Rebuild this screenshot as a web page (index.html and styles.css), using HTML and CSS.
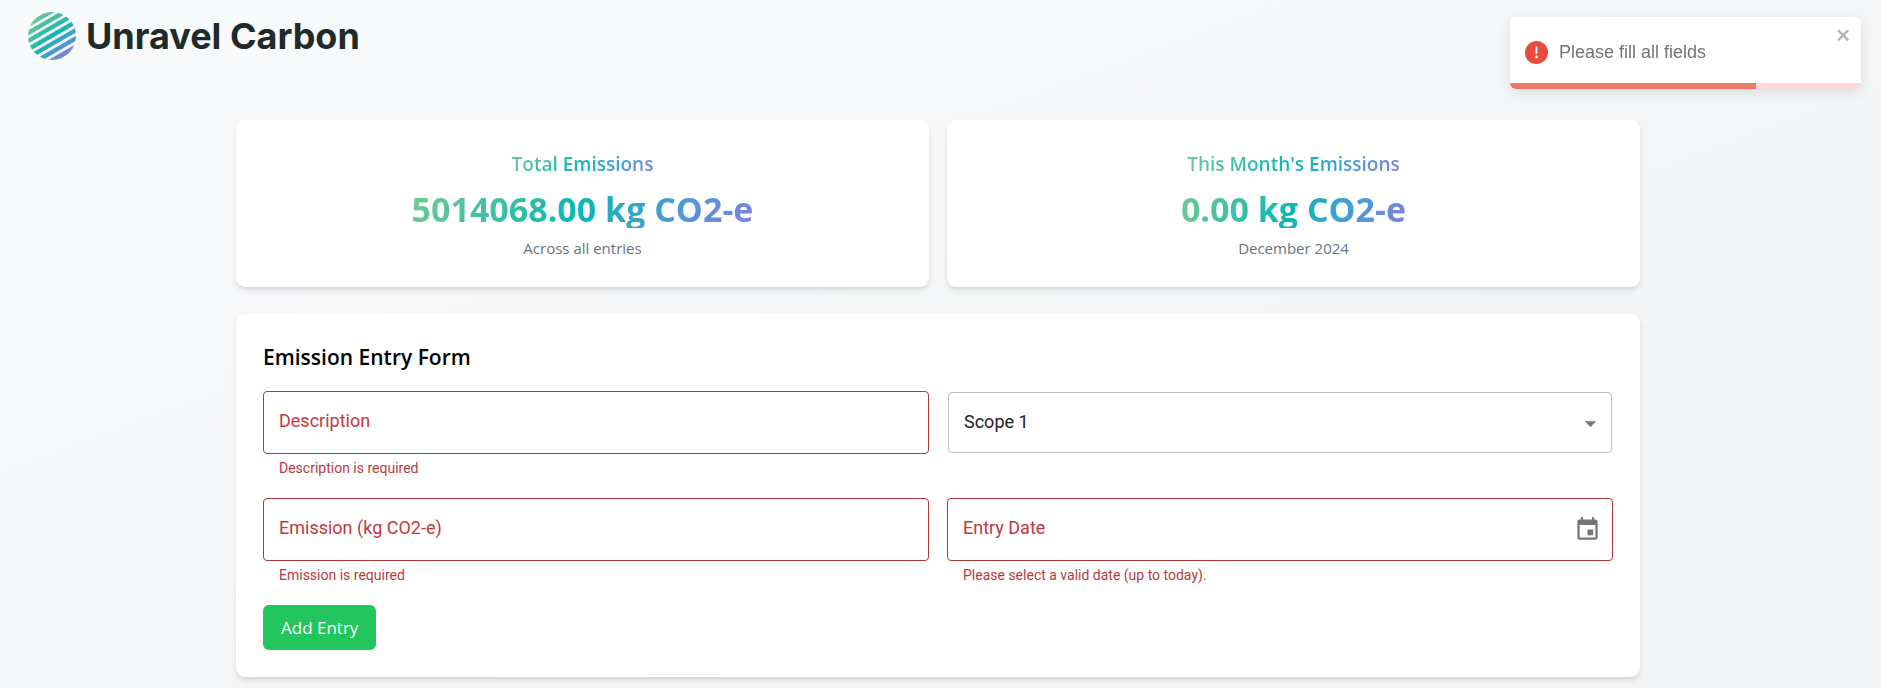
FILE: index.html
```html
<!DOCTYPE html>
<html lang="en">
<head>
<meta charset="utf-8">
<meta name="viewport" content="width=device-width, initial-scale=1">
<title>Unravel Carbon</title>
<link rel="stylesheet" href="styles.css">
</head>
<body>
<header class="header">
  <a class="brand" href="#">
    <svg class="brand-mark" viewBox="0 0 48 48" aria-hidden="true">
      <defs>
        <linearGradient id="brand-gradient" x1="0.15" y1="0.1" x2="0.85" y2="0.95">
          <stop offset="0" stop-color="#74c991"/>
          <stop offset="0.5" stop-color="#12b5b5"/>
          <stop offset="0.72" stop-color="#4a9bcf"/>
          <stop offset="1" stop-color="#8a7be0"/>
        </linearGradient>
        <mask id="brand-stripes">
          <g transform="rotate(-30 24 24)" fill="#fff">
            <rect x="-6" y="0" width="60" height="4.6"/>
            <rect x="-6" y="7.2" width="60" height="4.4"/>
            <rect x="-6" y="14.2" width="60" height="4.4"/>
            <rect x="-6" y="21.4" width="60" height="4.4"/>
            <rect x="-6" y="28.6" width="60" height="4.4"/>
            <rect x="-6" y="35.8" width="60" height="4.4"/>
            <rect x="-6" y="43" width="60" height="5"/>
          </g>
        </mask>
      </defs>
      <circle cx="24" cy="24" r="24" fill="url(#brand-gradient)" mask="url(#brand-stripes)"/>
    </svg>
    <span class="brand-name">Unravel Carbon</span>
  </a>
</header>

<main class="container">
  <section class="stats">
    <article class="card stat">
      <h2 class="stat-title gradient-text">Total Emissions</h2>
      <p class="stat-value gradient-text">5014068.00 kg CO2-e</p>
      <p class="stat-note">Across all entries</p>
    </article>
    <article class="card stat">
      <h2 class="stat-title gradient-text">This Month's Emissions</h2>
      <p class="stat-value gradient-text">0.00 kg CO2-e</p>
      <p class="stat-note">December 2024</p>
    </article>
  </section>

  <form class="card entry-form" novalidate>
    <h2 class="form-title">Emission Entry Form</h2>
    <div class="fields">
      <div class="field">
        <div class="control">
          <input class="input" id="description" type="text" aria-invalid="true" aria-describedby="description-error">
          <label class="label" for="description">Description</label>
        </div>
        <p class="error" id="description-error">Description is required</p>
      </div>
      <div class="field">
        <div class="control">
          <select class="select" id="scope" aria-label="Scope">
            <option selected>Scope 1</option>
            <option>Scope 2</option>
            <option>Scope 3</option>
          </select>
          <svg class="arrow" viewBox="0 0 24 24" aria-hidden="true"><path d="M7 10l5 5 5-5z"/></svg>
        </div>
      </div>
      <div class="field">
        <div class="control">
          <input class="input" id="emission" type="text" inputmode="decimal" aria-invalid="true" aria-describedby="emission-error">
          <label class="label" for="emission">Emission (kg CO2-e)</label>
        </div>
        <p class="error" id="emission-error">Emission is required</p>
      </div>
      <div class="field">
        <div class="control">
          <input class="input" id="entry-date" type="text" aria-invalid="true" aria-describedby="date-error">
          <label class="label" for="entry-date">Entry Date</label>
          <button class="calendar" type="button" aria-label="Choose date">
            <svg viewBox="0 0 24 24" aria-hidden="true"><path d="M17 12h-5v5h5v-5zM16 1v2H8V1H6v2H5c-1.11 0-1.99.9-1.99 2L3 19c0 1.1.89 2 2 2h14c1.1 0 2-.9 2-2V5c0-1.1-.9-2-2-2h-1V1h-2zm3 18H5V8h14v11z"/></svg>
          </button>
        </div>
        <p class="error" id="date-error">Please select a valid date (up to today).</p>
      </div>
    </div>
    <button class="submit" type="submit">Add Entry</button>
  </form>
</main>

<div class="toast" role="alert">
  <div class="toast-body">
    <svg class="toast-icon" viewBox="0 0 24 24" aria-hidden="true"><path d="M11.983 0a12.206 12.206 0 00-8.51 3.653A11.8 11.8 0 000 12.207 11.779 11.779 0 0011.8 24h.214A12.111 12.111 0 0024 11.791 11.766 11.766 0 0011.983 0zM10.5 16.542a1.476 1.476 0 011.449-1.53h.027a1.527 1.527 0 011.523 1.47 1.475 1.475 0 01-1.449 1.53h-.027a1.529 1.529 0 01-1.523-1.47zM11 12.5v-6a1 1 0 012 0v6a1 1 0 11-2 0z"/></svg>
    <span class="toast-text">Please fill all fields</span>
  </div>
  <button class="toast-close" type="button" aria-label="Close">
    <svg viewBox="0 0 14 16" aria-hidden="true"><path fill-rule="evenodd" d="M7.71 8.23l3.75 3.75-1.48 1.48-3.75-3.75-3.75 3.75L1 11.98l3.75-3.75L1 4.48 2.48 3l3.75 3.75L9.98 3l1.48 1.48-3.75 3.75z"/></svg>
  </button>
  <div class="toast-track"><div class="toast-progress" style="width: 70%"></div></div>
</div>
</body>
</html>
```
FILE: styles.css
```css
*,
*::before,
*::after {
  box-sizing: border-box;
}

body {
  margin: 0;
  min-height: 100vh;
  padding-right: 5px;
  font-family: "Segoe UI", "Open Sans", "Noto Sans", sans-serif;
  color: #000;
  background: linear-gradient(to bottom right, #f9fafb, #f3f4f6 70%, #f3f4f6);
}

h2,
p {
  margin: 0;
}

button,
input,
select {
  font: inherit;
}

.header {
  padding: 12px 28px 0;
}

.brand {
  display: inline-flex;
  align-items: center;
  gap: 10px;
  color: #1f2a2a;
  text-decoration: none;
}

.brand-mark {
  width: 48px;
  height: 48px;
}

.brand-name {
  font: 700 36px/48px Inter, sans-serif;
}

.container {
  max-width: 1436px;
  margin: 0 auto;
  padding: 55px 16px 12px;
}

.card {
  padding: 26px 27px 27px;
  background: #fff;
  border-radius: 9px;
  box-shadow: 0 4px 7px -1px rgb(0 0 0 / 10%), 0 2px 4px -2px rgb(0 0 0 / 10%);
}

.stats {
  display: grid;
  grid-template-columns: 1fr 1fr;
  gap: 18px;
  margin-bottom: 27px;
}

.stat {
  display: flex;
  flex-direction: column;
  align-items: center;
}

.gradient-text {
  color: transparent;
  background: linear-gradient(120deg, #74c991, #0ab8b5 50%, #4a9bd6 75%, #8080e0);
  -webkit-background-clip: text;
  background-clip: text;
}

.stat-title {
  font-size: 19px;
  line-height: 36px;
  font-weight: 600;
}

.stat-value {
  margin-top: 8px;
  font-size: 34px;
  line-height: 38px;
  font-weight: 700;
}

.stat-note {
  margin-top: 8px;
  font-size: 15px;
  line-height: 24px;
  color: #6b7280;
}

.form-title {
  margin-bottom: 16px;
  font-size: 21px;
  line-height: 35px;
  font-weight: 600;
}

.fields {
  display: grid;
  grid-template-columns: 1fr 1fr;
  gap: 18px;
  font-family: Roboto, sans-serif;
}

.control {
  position: relative;
}

.input,
.select {
  display: block;
  width: 100%;
  height: 63px;
  padding: 0 15px;
  font-size: 18px;
  color: #212121;
  background: #fff;
  border: 1px solid #b03a3a;
  border-radius: 4px;
  appearance: none;
}

.select {
  width: calc(100% - 2px);
  height: 61px;
  margin: 1px;
  padding-bottom: 2px;
  border-color: #c0c0c0;
}

.label {
  position: absolute;
  top: 17px;
  left: 16px;
  font-size: 18px;
  line-height: 25px;
  color: #c2393d;
  pointer-events: none;
}

.arrow {
  position: absolute;
  top: 18px;
  right: 9px;
  width: 27px;
  height: 27px;
  fill: #757575;
  pointer-events: none;
}

.calendar {
  position: absolute;
  top: 18px;
  right: 12px;
  width: 27px;
  height: 27px;
  padding: 0;
  background: none;
  border: 0;
}

.calendar svg {
  display: block;
  fill: #757575;
}

.error {
  margin: 3px 16px 0;
  font-size: 14px;
  line-height: 23px;
  color: #b83a3e;
}

.submit {
  margin-top: 18px;
  padding: 0 18px;
  font-size: 17px;
  line-height: 45px;
  color: #fff;
  background: #22c55e;
  border: 0;
  border-radius: 6px;
}

.toast {
  position: fixed;
  top: 17px;
  right: 20px;
  width: 351px;
  overflow: hidden;
  font-family: "Liberation Sans", Arial, sans-serif;
  color: #757575;
  background: #fff;
  border-radius: 6px;
  box-shadow: 0 4px 13px rgb(0 0 0 / 10%);
}

.toast-body {
  display: flex;
  align-items: center;
  gap: 11px;
  height: 66px;
  padding: 4px 15px 0;
}

.toast-icon {
  width: 23px;
  height: 23px;
  fill: #e74c3c;
}

.toast-text {
  font-size: 18px;
  line-height: 24px;
}

.toast-close {
  position: absolute;
  top: 9px;
  right: 9px;
  padding: 0;
  background: none;
  border: 0;
}

.toast-close svg {
  display: block;
  width: 16px;
  height: 18px;
  fill: #b3b3b3;
}

.toast-track {
  height: 6px;
  background: #fadbd8;
}

.toast-progress {
  height: 100%;
  background: #ea786b;
}
```
